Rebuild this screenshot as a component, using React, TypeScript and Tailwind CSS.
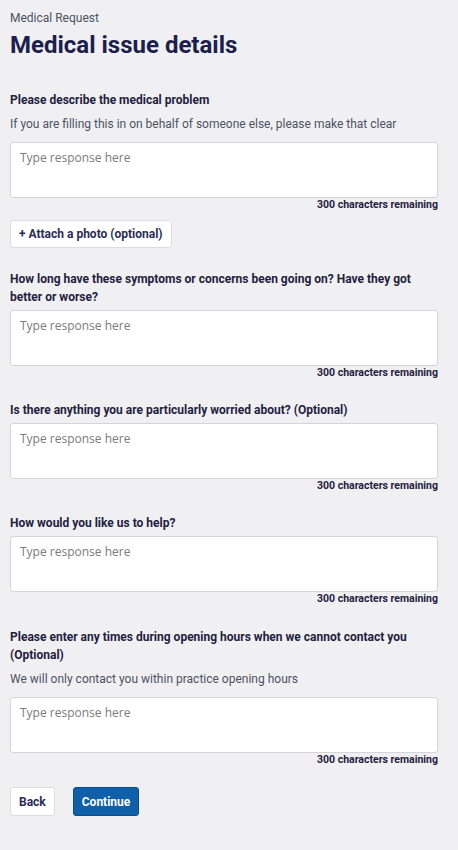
import React from 'react';

interface QuestionProps {
  label: React.ReactNode;
  hint?: string;
  gap?: string;
}

const Question: React.FC<QuestionProps> = ({ label, hint, gap = 'mt-[21px]' }) => {
  return (
    <div className={gap}>
      <div className="text-[12px] leading-[18px] font-bold text-[#1f2140]">{label}</div>
      {hint && (
        <div className="mt-[6px] text-[12px] leading-[18px] text-[#4d5262]">{hint}</div>
      )}
      <textarea
        placeholder="Type response here"
        className={`block w-full h-[56px] resize-none rounded-[3px] border border-[#d3d4dc] bg-white px-[9px] py-[6px] text-[12px] leading-[18px] text-[#222] placeholder:text-[#7b7b7b] outline-none ${hint ? 'mt-[9px]' : 'mt-[4px]'}`}
        style={{ fontFamily: '"Open Sans", "Liberation Sans", sans-serif' }}
      />
      <div className="text-right text-[10.5px] leading-[14px] font-bold text-[#1f2140]">
        300 characters remaining
      </div>
    </div>
  );
};

export default function App() {
  return (
    <div
      className="min-h-[850px] bg-[#f0f0f3] pl-[10px] pr-[20px] pt-[10px] pb-[30px]"
      style={{ fontFamily: 'Roboto, "Liberation Sans", sans-serif' }}
    >
      <div className="text-[12px] leading-[16px] text-[#4d5262]">Medical Request</div>
      <h1 className="mt-[3px] text-[24px] leading-[32px] font-bold text-[#1c1e4d]">
        Medical issue details
      </h1>

      <Question
        gap="mt-[30px]"
        label="Please describe the medical problem"
        hint="If you are filling this in on behalf of someone else, please make that clear"
      />

      <button className="mt-[8px] h-[28px] rounded-[3px] border border-[#dcdce6] bg-white px-[8px] text-[12px] font-bold text-[#2b2d58]">
        + Attach a photo (optional)
      </button>

      <Question
        gap="mt-[22px]"
        label="How long have these symptoms or concerns been going on? Have they got better or worse?"
      />
      <Question label="Is there anything you are particularly worried about? (Optional)" />
      <Question label="How would you like us to help?" />
      <Question
        gap="mt-[22px]"
        label="Please enter any times during opening hours when we cannot contact you (Optional)"
        hint="We will only contact you within practice opening hours"
      />

      <div className="mt-[20px] flex gap-[18px]">
        <button className="h-[29px] rounded-[3px] border border-[#dcdce6] bg-white px-[8px] text-[12px] font-bold text-[#2b2d58]">
          Back
        </button>
        <button className="h-[29px] rounded-[3px] border border-[#0b4c8c] bg-[#0f5fa9] px-[8px] text-[12px] font-bold text-white">
          Continue
        </button>
      </div>
    </div>
  );
}
